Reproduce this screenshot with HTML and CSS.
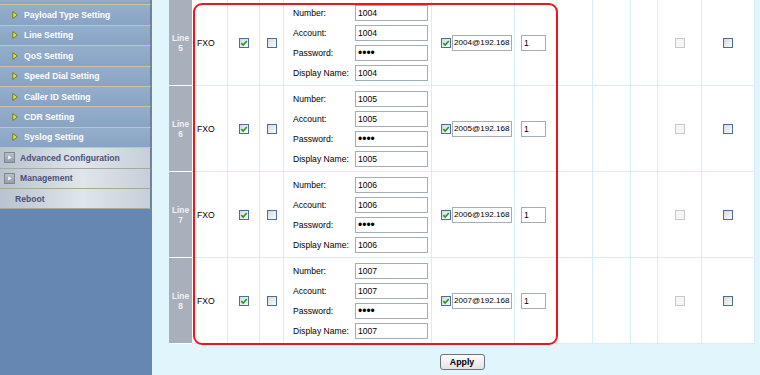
FILE: index.html
```html
<!DOCTYPE html>
<html>
<head>
<meta charset="utf-8">
<link rel="stylesheet" href="styles.css">
</head>
<body>
<div class="page">
  <aside class="sidebar">
    <ul class="nav">
      <li class="sub stub"></li>
      <li class="sub"><svg class="bullet" viewBox="0 0 6 8"><polygon points="0.8,0.6 5.4,4 0.8,7.4" /></svg>Payload Type Setting</li>
      <li class="sub"><svg class="bullet" viewBox="0 0 6 8"><polygon points="0.8,0.6 5.4,4 0.8,7.4" /></svg>Line Setting</li>
      <li class="sub"><svg class="bullet" viewBox="0 0 6 8"><polygon points="0.8,0.6 5.4,4 0.8,7.4" /></svg>QoS Setting</li>
      <li class="sub"><svg class="bullet" viewBox="0 0 6 8"><polygon points="0.8,0.6 5.4,4 0.8,7.4" /></svg>Speed Dial Setting</li>
      <li class="sub"><svg class="bullet" viewBox="0 0 6 8"><polygon points="0.8,0.6 5.4,4 0.8,7.4" /></svg>Caller ID Setting</li>
      <li class="sub"><svg class="bullet" viewBox="0 0 6 8"><polygon points="0.8,0.6 5.4,4 0.8,7.4" /></svg>CDR Setting</li>
      <li class="sub"><svg class="bullet" viewBox="0 0 6 8"><polygon points="0.8,0.6 5.4,4 0.8,7.4" /></svg>Syslog Setting</li>
      <li class="main"><span class="ico"><svg viewBox="0 0 11 11"><polygon points="4,3 8,5.5 4,8" /></svg></span>Advanced Configuration</li>
      <li class="main"><span class="ico"><svg viewBox="0 0 11 11"><polygon points="4,3 8,5.5 4,8" /></svg></span>Management</li>
      <li class="main plain">Reboot</li>
    </ul>
  </aside>
  <main class="content">
    <div class="grid-wrap">
      <table class="lines">
        <colgroup>
          <col class="c-line"><col class="c-type"><col class="c-cb1"><col class="c-cb2"><col class="c-fields"><col class="c-dest"><col class="c-num"><col class="c-e1"><col class="c-e2"><col class="c-e3"><col class="c-dis"><col class="c-last">
        </colgroup>
        <tbody>
          <tr>
            <td class="line-cell">Line<br>5</td>
            <td class="type">FXO</td>
            <td class="center"><span class="cb"><svg viewBox="0 0 8 8"><path d="M1.3 4.1 L3.2 6 L6.8 2" /></svg></span></td>
            <td class="center"><span class="cb"></span></td>
            <td class="fields">
              <div class="form">
                <label>Number:</label><input type="text" value="1004">
                <label>Account:</label><input type="text" value="1004">
                <label>Password:</label><input type="password" value="1004">
                <label>Display Name:</label><input type="text" value="1004">
              </div>
            </td>
            <td class="dest"><span class="cb"><svg viewBox="0 0 8 8"><path d="M1.3 4.1 L3.2 6 L6.8 2" /></svg></span><input class="uri" type="text" value="2004@192.168.1.100"></td>
            <td class="num"><input class="small" type="text" value="1"></td>
            <td></td><td></td><td></td>
            <td class="center"><span class="cb disabled"></span></td>
            <td class="center"><span class="cb"></span></td>
          </tr>
          <tr>
            <td class="line-cell">Line<br>6</td>
            <td class="type">FXO</td>
            <td class="center"><span class="cb"><svg viewBox="0 0 8 8"><path d="M1.3 4.1 L3.2 6 L6.8 2" /></svg></span></td>
            <td class="center"><span class="cb"></span></td>
            <td class="fields">
              <div class="form">
                <label>Number:</label><input type="text" value="1005">
                <label>Account:</label><input type="text" value="1005">
                <label>Password:</label><input type="password" value="1005">
                <label>Display Name:</label><input type="text" value="1005">
              </div>
            </td>
            <td class="dest"><span class="cb"><svg viewBox="0 0 8 8"><path d="M1.3 4.1 L3.2 6 L6.8 2" /></svg></span><input class="uri" type="text" value="2005@192.168.1.100"></td>
            <td class="num"><input class="small" type="text" value="1"></td>
            <td></td><td></td><td></td>
            <td class="center"><span class="cb disabled"></span></td>
            <td class="center"><span class="cb"></span></td>
          </tr>
          <tr>
            <td class="line-cell">Line<br>7</td>
            <td class="type">FXO</td>
            <td class="center"><span class="cb"><svg viewBox="0 0 8 8"><path d="M1.3 4.1 L3.2 6 L6.8 2" /></svg></span></td>
            <td class="center"><span class="cb"></span></td>
            <td class="fields">
              <div class="form">
                <label>Number:</label><input type="text" value="1006">
                <label>Account:</label><input type="text" value="1006">
                <label>Password:</label><input type="password" value="1006">
                <label>Display Name:</label><input type="text" value="1006">
              </div>
            </td>
            <td class="dest"><span class="cb"><svg viewBox="0 0 8 8"><path d="M1.3 4.1 L3.2 6 L6.8 2" /></svg></span><input class="uri" type="text" value="2006@192.168.1.100"></td>
            <td class="num"><input class="small" type="text" value="1"></td>
            <td></td><td></td><td></td>
            <td class="center"><span class="cb disabled"></span></td>
            <td class="center"><span class="cb"></span></td>
          </tr>
          <tr>
            <td class="line-cell">Line<br>8</td>
            <td class="type">FXO</td>
            <td class="center"><span class="cb"><svg viewBox="0 0 8 8"><path d="M1.3 4.1 L3.2 6 L6.8 2" /></svg></span></td>
            <td class="center"><span class="cb"></span></td>
            <td class="fields">
              <div class="form">
                <label>Number:</label><input type="text" value="1007">
                <label>Account:</label><input type="text" value="1007">
                <label>Password:</label><input type="password" value="1007">
                <label>Display Name:</label><input type="text" value="1007">
              </div>
            </td>
            <td class="dest"><span class="cb"><svg viewBox="0 0 8 8"><path d="M1.3 4.1 L3.2 6 L6.8 2" /></svg></span><input class="uri" type="text" value="2007@192.168.1.100"></td>
            <td class="num"><input class="small" type="text" value="1"></td>
            <td></td><td></td><td></td>
            <td class="center"><span class="cb disabled"></span></td>
            <td class="center"><span class="cb"></span></td>
          </tr>
        </tbody>
      </table>
      <div class="highlight"></div>
    </div>
    <div class="actions"><button class="apply" type="button">Apply</button></div>
  </main>
</div>
</body>
</html>
```
FILE: styles.css
```css
html, body {
  margin: 0;
  padding: 0;
  background: #e0f6fc;
  font-family: "Liberation Sans", Arial, sans-serif;
  font-size: 8.6px;
  color: #000;
}
.page {
  display: flex;
  height: 375px;
  overflow: hidden;
}
.sidebar {
  width: 152px;
  flex: 0 0 152px;
  background: #6787b3;
  overflow: hidden;
}
.nav {
  list-style: none;
  margin: 0;
  padding: 0;
}
.nav li {
  box-sizing: border-box;
  height: 20.4px;
  display: flex;
  align-items: center;
  font-weight: bold;
  font-size: 8.6px;
  width: 151px;
  border-right: 1px solid #6e7f98;
}
.nav li.stub {
  height: 5.4px;
}
.nav .sub {
  background: linear-gradient(#95aecb, #88a3c4);
  color: #fff;
  border-bottom: 1px solid #c9c4a6;
  padding-left: 12px;
}
.bullet {
  width: 6px;
  height: 8px;
  margin-right: 6px;
}
.bullet polygon {
  fill: #dfe82a;
  stroke: #5f6a1e;
  stroke-width: 0.8;
}
.nav .main {
  background: linear-gradient(to right, #b8c3cf 0%, #dfe5eb 55%, #c6cfd9 100%);
  color: #4a5078;
  border-bottom: 1px solid #a9a99a;
  padding-left: 4px;
}
.nav .main.plain {
  padding-left: 15px;
}
.ico {
  width: 11px;
  height: 11px;
  box-sizing: border-box;
  border: 1px solid #7f8791;
  background: linear-gradient(#b7bec7, #959da8);
  margin-right: 5px;
  display: inline-flex;
}
.ico svg {
  width: 9px;
  height: 9px;
}
.ico polygon {
  fill: #fff;
}
.content {
  flex: 1;
  padding-left: 17px;
}
.grid-wrap {
  position: relative;
  width: 586px;
}
.lines {
  width: 586px;
  table-layout: fixed;
  border-spacing: 0;
  background: #fff;
}
.c-line { width: 23px; }
.c-type { width: 36px; }
.c-cb1 { width: 32px; }
.c-cb2 { width: 24px; }
.c-fields { width: 148px; }
.c-dest { width: 83px; }
.c-num { width: 42px; }
.c-e1 { width: 36px; }
.c-e2 { width: 38px; }
.c-e3 { width: 27px; }
.c-dis { width: 44px; }
.c-last { width: 53px; }
.lines tr {
  height: 86px;
}
.lines td {
  padding: 0;
  border-right: 1px solid #d5eef8;
  border-bottom: 1px solid #d5eef8;
  vertical-align: middle;
}
.lines td.line-cell {
  background: #a8b0bb;
  color: #eef1f4;
  font-weight: bold;
  font-size: 8.4px;
  line-height: 10px;
  text-align: center;
  border-right: none;
  border-bottom: 1px solid #fff;
}
.lines td.type {
  padding-left: 5px;
}
.lines td.center {
  text-align: center;
}
.cb {
  display: inline-block;
  width: 10px;
  height: 10px;
  box-sizing: border-box;
  border: 1px solid #4b6e98;
  background: linear-gradient(135deg, #d6d9dd, #fbfbfb);
  vertical-align: middle;
}
.cb svg {
  display: block;
  width: 8px;
  height: 8px;
}
.cb path {
  fill: none;
  stroke: #1d9c22;
  stroke-width: 1.6;
}
.cb.disabled {
  border-color: #c9c9c9;
  background: #f5f5f5;
}
.lines td.fields {
  padding-left: 9px;
}
.form {
  display: grid;
  grid-template-columns: 62px 73px;
  row-gap: 4px;
  align-items: center;
}
input {
  font: inherit;
  color: #000;
  box-sizing: border-box;
  height: 16px;
  border: 1px solid #a3adb8;
  background: #fff;
  padding: 0 2px;
  margin: 0;
  outline: none;
}
input[type="password"] {
  font-size: 12px;
  letter-spacing: 0;
}
.form input {
  width: 73px;
}
.lines td.dest {
  padding-left: 9px;
  white-space: nowrap;
}
.dest .cb {
  margin-right: 1px;
}
.uri {
  width: 60px;
  vertical-align: middle;
  padding: 0 1px;
  font-size: 8.1px;
}
.lines td.num {
  padding-left: 6px;
}
.small {
  width: 25px;
}
.highlight {
  position: absolute;
  left: 24px;
  top: 3px;
  width: 365px;
  height: 342px;
  box-sizing: border-box;
  border: 2px solid #f2141a;
  border-radius: 9px;
  pointer-events: none;
}
.actions {
  width: 586px;
  padding-top: 10px;
  text-align: center;
}
.apply {
  font: inherit;
  font-weight: bold;
  font-size: 8.8px;
  width: 45px;
  height: 16px;
  padding: 0;
  border: 1px solid #6f7378;
  border-radius: 3px;
  background: linear-gradient(#fdfdfd, #e3e3e3);
  color: #000;
}
```
